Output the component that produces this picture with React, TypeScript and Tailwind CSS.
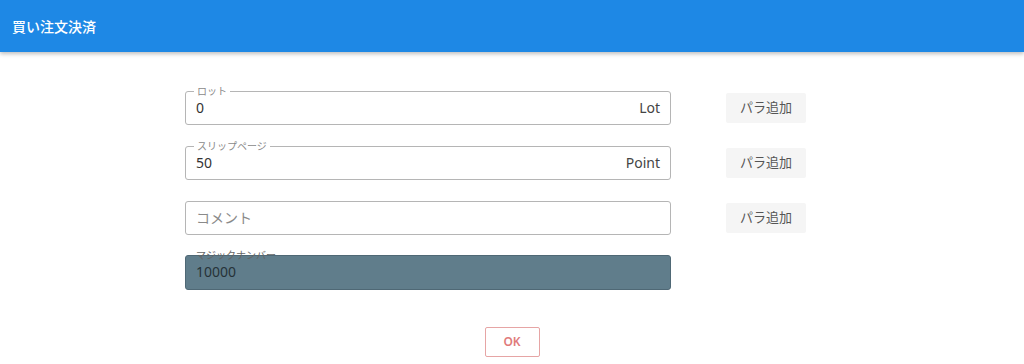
import React from "react";

const font = { fontFamily: '"Noto Sans", "Noto Sans CJK JP", sans-serif' };

function Field({ label, value, unit, placeholder }: { label?: string; value?: string; unit?: string; placeholder?: string }) {
  return (
    <div className="relative h-[34px] w-[486px] rounded-[3px] border border-[#b5b5b5] bg-white flex items-center px-[10px] pb-[2px]">
      {label && (
        <span className="absolute left-[8px] top-[-7px] bg-white px-[3px] text-[10px] leading-[12px] text-[#8a8a8a]">
          {label}
        </span>
      )}
      <span className={"flex-1 text-[14px] " + (value ? "text-[#333]" : "text-[#8a8a8a]")}>{value ?? placeholder}</span>
      {unit && <span className="text-[14px] text-[#444]">{unit}</span>}
    </div>
  );
}

function AddButton() {
  return (
    <button className="h-[30px] w-[80px] rounded-[2px] bg-[#f5f5f5] text-[13px] text-[#555]">パラ追加</button>
  );
}

export default function App() {
  return (
    <div className="h-[364px] w-[1024px] bg-white overflow-hidden" style={font}>
      <div className="relative z-10 h-[52px] bg-[#1e88e5] flex items-center pl-[12px] shadow-[0_2px_4px_rgba(0,0,0,0.25)]">
        <span className="text-[14px] font-medium text-white">買い注文決済</span>
      </div>
      <div className="flex flex-col gap-[21px] pl-[185px] pt-[39px]">
        <div className="flex items-center gap-[55px]">
          <Field label="ロット" value="0" unit="Lot" />
          <AddButton />
        </div>
        <div className="flex items-center gap-[55px]">
          <Field label="スリップページ" value="50" unit="Point" />
          <AddButton />
        </div>
        <div className="flex items-center gap-[55px]">
          <Field placeholder="コメント" />
          <AddButton />
        </div>
        <div className="relative mt-[-1px] h-[35px] w-[486px] rounded-[3px] border border-[#4f6875] bg-[#607d8b] flex items-center px-[10px] pb-[2px]">
          <span className="absolute left-[10px] top-[-7px] text-[10px] leading-[12px] text-[#666]">マジックナンバー</span>
          <span className="text-[14px] text-[#263238]">10000</span>
        </div>
      </div>
      <div className="mt-[37px] flex justify-center">
        <button className="h-[30px] w-[55px] rounded-[2px] border border-[#e6a5a5] text-[12px] font-semibold text-[#e07a7a]">OK</button>
      </div>
    </div>
  );
}
